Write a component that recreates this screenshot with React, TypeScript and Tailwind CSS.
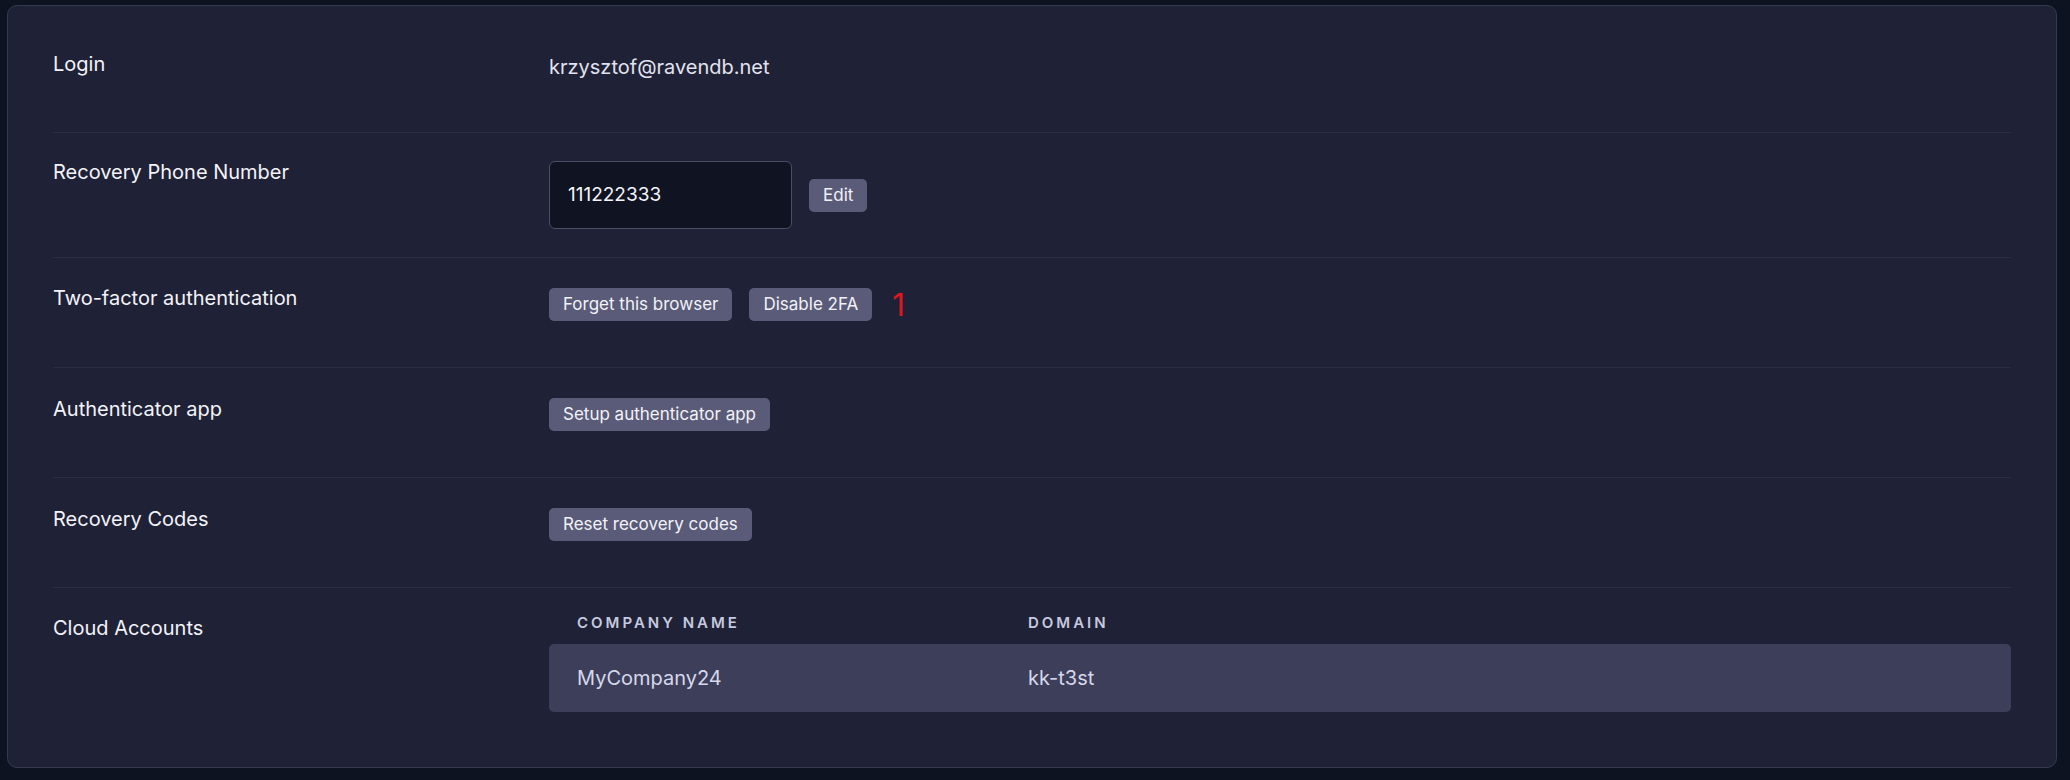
import React from 'react';

const font = { fontFamily: 'Inter, "Noto Sans", sans-serif' };

const Btn: React.FC<{ children: React.ReactNode }> = ({ children }) => (
  <button className="h-[33px] rounded-[5px] bg-[#5a5b78] px-[14px] text-[17px] leading-none text-[#f2f2f7]">
    {children}
  </button>
);

const Label: React.FC<{ children: React.ReactNode }> = ({ children }) => (
  <div className="w-[496px] shrink-0 text-[20px] leading-[30px] text-[#f3f3f8]">{children}</div>
);

export default function App() {
  return (
    <div style={font} className="min-h-screen bg-[#0e1322] pb-[12px] pl-[7px] pr-[13px] pt-[5px]">
      <div className="rounded-[10px] border border-[#373950] bg-[#1f2136] px-[45px]">
        {/* login */}
        <div className="flex border-b border-[#2b2d44] pb-[50px] pt-[43px]">
          <Label>Login</Label>
          <div className="mt-[3px] text-[20px] leading-[30px] text-[#e2e3ef]">krzysztof@ravendb.net</div>
        </div>

        {/* phone */}
        <div className="flex border-b border-[#2b2d44] pb-[28px] pt-[24px]">
          <Label>Recovery Phone Number</Label>
          <div className="mt-[4px] flex items-center gap-[17px]">
            <div className="flex h-[68px] w-[243px] items-center rounded-[6px] border border-[#4b4d66] bg-[#0f1322] pl-[18px] text-[19px] text-[#f5f5fa]">
              111222333
            </div>
            <Btn>Edit</Btn>
          </div>
        </div>

        {/* 2fa */}
        <div className="flex border-b border-[#2b2d44] pb-[46px] pt-[25px]">
          <Label>Two-factor authentication</Label>
          <div className="mt-[5px] flex items-center">
            <Btn>Forget this browser</Btn>
            <div className="ml-[17px]">
              <Btn>Disable 2FA</Btn>
            </div>
            <span className="ml-[20px] text-[31px] leading-none text-[#e0161f]">1</span>
          </div>
        </div>

        <div className="flex border-b border-[#2b2d44] pb-[46px] pt-[26px]">
          <Label>Authenticator app</Label>
          <div className="mt-[4px] flex">
            <Btn>Setup authenticator app</Btn>
          </div>
        </div>

        <div className="flex border-b border-[#2b2d44] pb-[46px] pt-[26px]">
          <Label>Recovery Codes</Label>
          <div className="mt-[4px] flex">
            <Btn>Reset recovery codes</Btn>
          </div>
        </div>

        {/* cloud accounts */}
        <div className="flex pb-[55px] pt-[25px]">
          <Label>Cloud Accounts</Label>
          <div className="flex-1">
            <div className="flex pb-[11px] text-[15px] font-semibold uppercase leading-[20px] tracking-[3px] text-[#c6c9df]">
              <div className="w-[479px] pl-[28px]">Company Name</div>
              <div>Domain</div>
            </div>
            <div className="flex h-[68px] items-center rounded-[5px] bg-[#3d3e5a] text-[20px] text-[#d6d8ea]">
              <div className="w-[479px] pl-[28px]">MyCompany24</div>
              <div>kk-t3st</div>
            </div>
          </div>
        </div>
      </div>
    </div>
  );
}
